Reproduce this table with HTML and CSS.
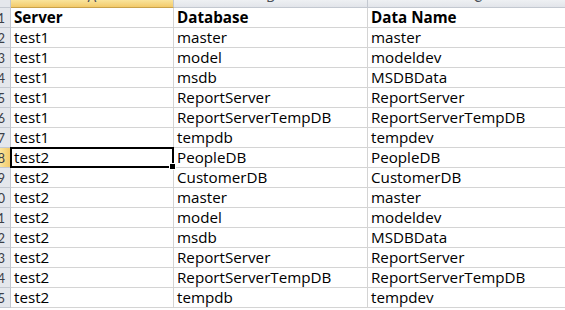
FILE: index.html
```html
<!DOCTYPE html>
<html>
<head>
<meta charset="utf-8">
<link rel="stylesheet" href="styles.css">
</head>
<body>
<div class="sheet">
  <div class="corner"></div>
  <div class="colhead active"><span>A</span></div>
  <div class="colhead"><span>B</span></div>
  <div class="colhead"><span>C</span></div>

  <div class="rowhead"><span>1</span></div>
  <div class="cell bold">Server</div><div class="cell bold">Database</div><div class="cell bold">Data Name</div>

  <div class="rowhead"><span>2</span></div>
  <div class="cell">test1</div><div class="cell">master</div><div class="cell">master</div>

  <div class="rowhead"><span>3</span></div>
  <div class="cell">test1</div><div class="cell">model</div><div class="cell">modeldev</div>

  <div class="rowhead"><span>4</span></div>
  <div class="cell">test1</div><div class="cell">msdb</div><div class="cell">MSDBData</div>

  <div class="rowhead"><span>5</span></div>
  <div class="cell">test1</div><div class="cell">ReportServer</div><div class="cell">ReportServer</div>

  <div class="rowhead"><span>6</span></div>
  <div class="cell">test1</div><div class="cell">ReportServerTempDB</div><div class="cell">ReportServerTempDB</div>

  <div class="rowhead"><span>7</span></div>
  <div class="cell">test1</div><div class="cell">tempdb</div><div class="cell">tempdev</div>

  <div class="rowhead active"><span>8</span></div>
  <div class="cell sel">test2</div><div class="cell">PeopleDB</div><div class="cell">PeopleDB</div>

  <div class="rowhead"><span>9</span></div>
  <div class="cell">test2</div><div class="cell">CustomerDB</div><div class="cell">CustomerDB</div>

  <div class="rowhead"><span>10</span></div>
  <div class="cell">test2</div><div class="cell">master</div><div class="cell">master</div>

  <div class="rowhead"><span>11</span></div>
  <div class="cell">test2</div><div class="cell">model</div><div class="cell">modeldev</div>

  <div class="rowhead"><span>12</span></div>
  <div class="cell">test2</div><div class="cell">msdb</div><div class="cell">MSDBData</div>

  <div class="rowhead"><span>13</span></div>
  <div class="cell">test2</div><div class="cell">ReportServer</div><div class="cell">ReportServer</div>

  <div class="rowhead"><span>14</span></div>
  <div class="cell">test2</div><div class="cell">ReportServerTempDB</div><div class="cell">ReportServerTempDB</div>

  <div class="rowhead"><span>15</span></div>
  <div class="cell">test2</div><div class="cell">tempdb</div><div class="cell">tempdev</div>
</div>
</body>
</html>
```
FILE: styles.css
```css
html, body {
  margin: 0;
  padding: 0;
  background: #ffffff;
  overflow: hidden;
  height: 310px;
}
.sheet {
  display: grid;
  grid-template-columns: 11px 163px 194px 220px;
  grid-template-rows: 8px repeat(15, 20px);
  font-family: "Open Sans", Lato, sans-serif;
  font-size: 15.2px;
  color: #000;
}
.corner {
  background: #e4e7ec;
  border-right: 1px solid #c3c8d0;
  border-bottom: 1px solid #c3c8d0;
}
.colhead {
  background: linear-gradient(#eef0f3, #e2e5ea);
  border-right: 1px solid #c3c8d0;
  border-bottom: 1px solid #c3c8d0;
  display: flex;
  justify-content: center;
  align-items: flex-end;
  overflow: hidden;
  font-family: Lato, sans-serif;
  font-size: 13px;
  color: #4a4f57;
}
.colhead span {
  line-height: 13px;
  margin-bottom: 3px;
}
.colhead.active {
  background: linear-gradient(#f9e49c, #f3ca6a);
  border-bottom-color: #c9a24a;
}
.rowhead {
  background: #e4e7ec;
  border-right: 1px solid #c3c8d0;
  border-bottom: 1px solid #c3c8d0;
  display: flex;
  justify-content: flex-end;
  align-items: center;
  overflow: hidden;
  font-family: Lato, sans-serif;
  font-size: 13px;
  color: #3c4048;
}
.rowhead span {
  margin-right: 5px;
  white-space: nowrap;
}
.rowhead.active {
  background: linear-gradient(90deg, #f9e49c, #f3ca6a);
}
.cell {
  border-right: 1px solid #d4d4d4;
  border-bottom: 1px solid #d4d4d4;
  padding: 0 0 0 3px;
  display: flex;
  align-items: flex-end;
  line-height: 19px;
  white-space: nowrap;
  overflow: visible;
}
.bold {
  font-weight: bold;
}
.sel {
  position: relative;
}
.sel::before {
  content: "";
  position: absolute;
  left: -1px;
  top: -1px;
  right: -1px;
  bottom: -1px;
  border: 2px solid #000;
}
.sel::after {
  content: "";
  position: absolute;
  right: -3px;
  bottom: -3px;
  width: 5px;
  height: 5px;
  background: #000;
  border: 1px solid #fff;
}
```
